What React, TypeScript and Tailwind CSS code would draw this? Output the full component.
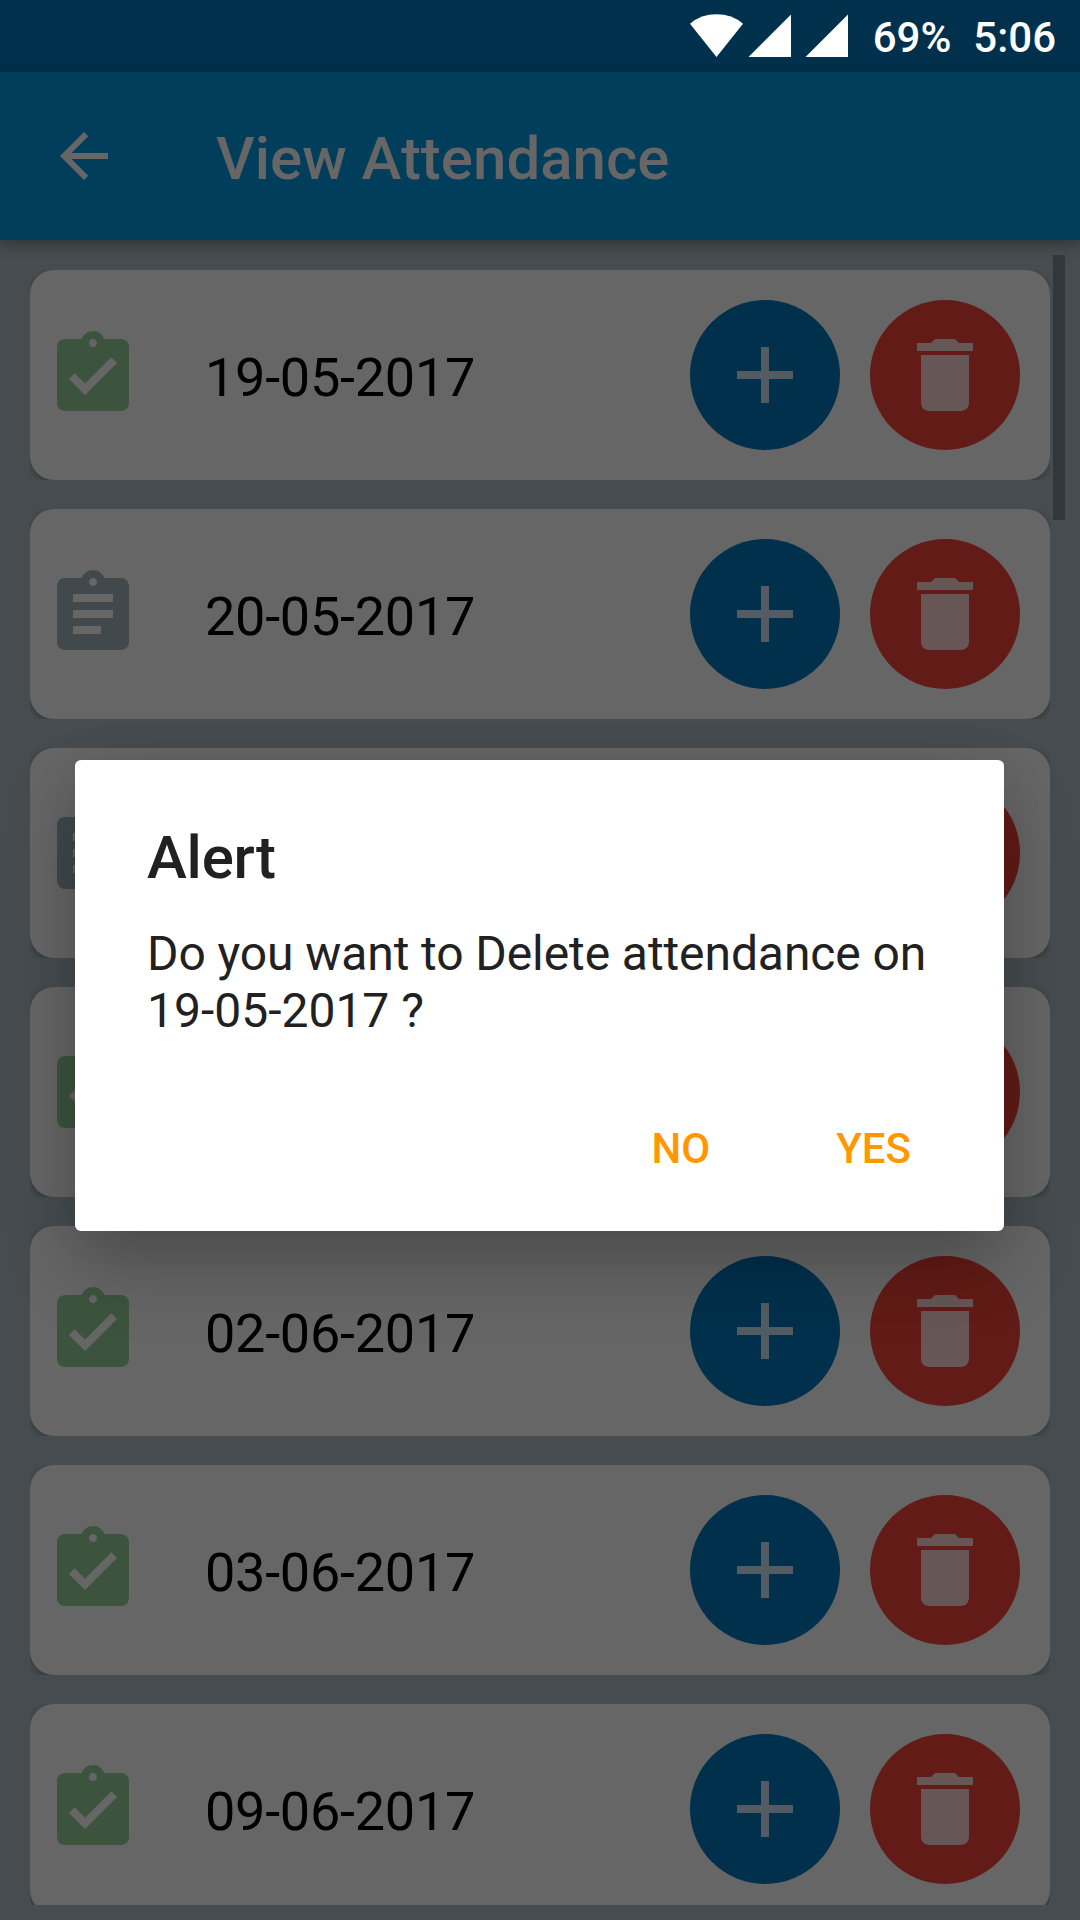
type Row = { date: string; done: boolean };

const rows: Row[] = [
  { date: "19-05-2017", done: true },
  { date: "20-05-2017", done: false },
  { date: "26-05-2017", done: false },
  { date: "27-05-2017", done: true },
  { date: "02-06-2017", done: true },
  { date: "03-06-2017", done: true },
  { date: "09-06-2017", done: true },
];

function Icon({ d, className }: { d: string; className: string }) {
  return (
    <svg viewBox="0 0 24 24" fill="currentColor" className={className}>
      <path d={d} />
    </svg>
  );
}

const CLIP =
  "M19 3h-4.18C14.4 1.84 13.3 1 12 1c-1.3 0-2.4.84-2.82 2H5c-1.1 0-2 .9-2 2v14c0 1.1.9 2 2 2h14c1.1 0 2-.9 2-2V5c0-1.1-.9-2-2-2zm-7 0c.55 0 1 .45 1 1s-.45 1-1 1-1-.45-1-1 .45-1 1-1z";
const CLIP_DONE = CLIP + "m-2 14l-4-4 1.41-1.41L10 14.17l6.59-6.59L18 9l-8 8z";
const CLIP_LIST = CLIP + "m2 14H7v-2h7v2zm3-4H7v-2h10v2zm0-4H7V7h10v2z";
const BACK = "M20 11H7.83l5.59-5.59L12 4l-8 8 8 8 1.41-1.41L7.83 13H20v-2z";
const ADD = "M19 13h-6v6h-2v-6H5v-2h6V5h2v6h6v2z";
const TRASH = "M6 19c0 1.1.9 2 2 2h8c1.1 0 2-.9 2-2V7H6v12zM19 4h-3.5l-1-1h-5l-1 1H5v2h14V4z";

function StatusBar() {
  return (
    <div className="flex h-[72px] shrink-0 items-center justify-end bg-[#01304c] pr-6 text-white">
      <svg viewBox="0 0 160 44" className="h-[44px] w-[160px]" fill="currentColor">
        <path d="M2 9.700Q13 0.300 28.500 0.300T55 9.700L28.500 43z" />
        <path d="M103 0.500v42.500H60.500z" />
        <path d="M160 0.500v42.500H117.500z" />
      </svg>
      <span className="ml-[25px] pt-1 text-[42px] font-medium leading-none">69%</span>
      <span className="ml-[22px] pt-1 text-[42px] font-medium leading-none">5:06</span>
    </div>
  );
}

function Card({ date, done }: Row) {
  return (
    <li className="h-[210px] shrink-0 overflow-hidden">
      <div className="flex h-full items-center rounded-[24px] bg-[#666666] pl-[15px] pr-[30px] shadow-[0_2px_7px_rgba(0,0,0,0.3)]">
        <Icon
          d={done ? CLIP_DONE : CLIP_LIST}
          className={done ? "size-24 text-[#3c543d]" : "size-24 text-[#41494c]"}
        />
        <span className="ml-16 grow pt-[5px] text-[54px] leading-none tracking-[-0.25px] text-black">{date}</span>
        <button className="flex size-[150px] items-center justify-center rounded-full bg-[#01304c]">
          <Icon d={ADD} className="size-24 text-[#525c62]" />
        </button>
        <button className="ml-[30px] flex size-[150px] items-center justify-center rounded-full bg-[#621b16]">
          <Icon d={TRASH} className="size-24 text-[#665656]" />
        </button>
      </div>
    </li>
  );
}

export default function App() {
  return (
    <div className="relative flex h-[1920px] w-[1080px] flex-col overflow-hidden bg-[#464c4f] font-['Roboto',sans-serif]">
      <StatusBar />
      <header className="flex h-[168px] shrink-0 items-center bg-[#013e5c] pl-12 text-[#666666] shadow-[0_5px_12px_rgba(0,0,0,0.28)]">
        <Icon d={BACK} className="size-[72px]" />
        <h1 className="ml-24 pt-[5px] text-[60px] font-medium leading-none">View Attendance</h1>
      </header>
      <ul className="mt-[15px] flex h-[1650px] flex-col gap-[29px] overflow-hidden px-[30px] pt-[15px]">
        {rows.map((r) => (
          <Card key={r.date} {...r} />
        ))}
      </ul>
      <div className="absolute left-[1053px] top-[255px] h-[265px] w-3 bg-[#333739]" />
      <div
        role="dialog"
        className="absolute left-[75px] top-[760px] flex h-[471px] w-[929px] flex-col rounded-[6px] bg-white pl-[72px] text-[#212121] shadow-[0_36px_72px_rgba(0,0,0,0.24),0_0_48px_rgba(0,0,0,0.06)]"
      >
        <h2 className="mt-[63px] text-[60px] font-medium leading-[70px] tracking-[-0.2px]">Alert</h2>
        <p className="mt-8 text-[48px] leading-[57px]">
          <span className="tracking-[-0.09px]">Do you want to Delete attendance on</span>
          <br />
          19-05-2017 ?
        </p>
        <div className="mt-[85px] flex justify-end pr-[93px] text-[42px] font-medium leading-[50px] text-[#ff9800]">
          <button>NO</button>
          <button className="ml-[126px]">YES</button>
        </div>
      </div>
    </div>
  );
}
